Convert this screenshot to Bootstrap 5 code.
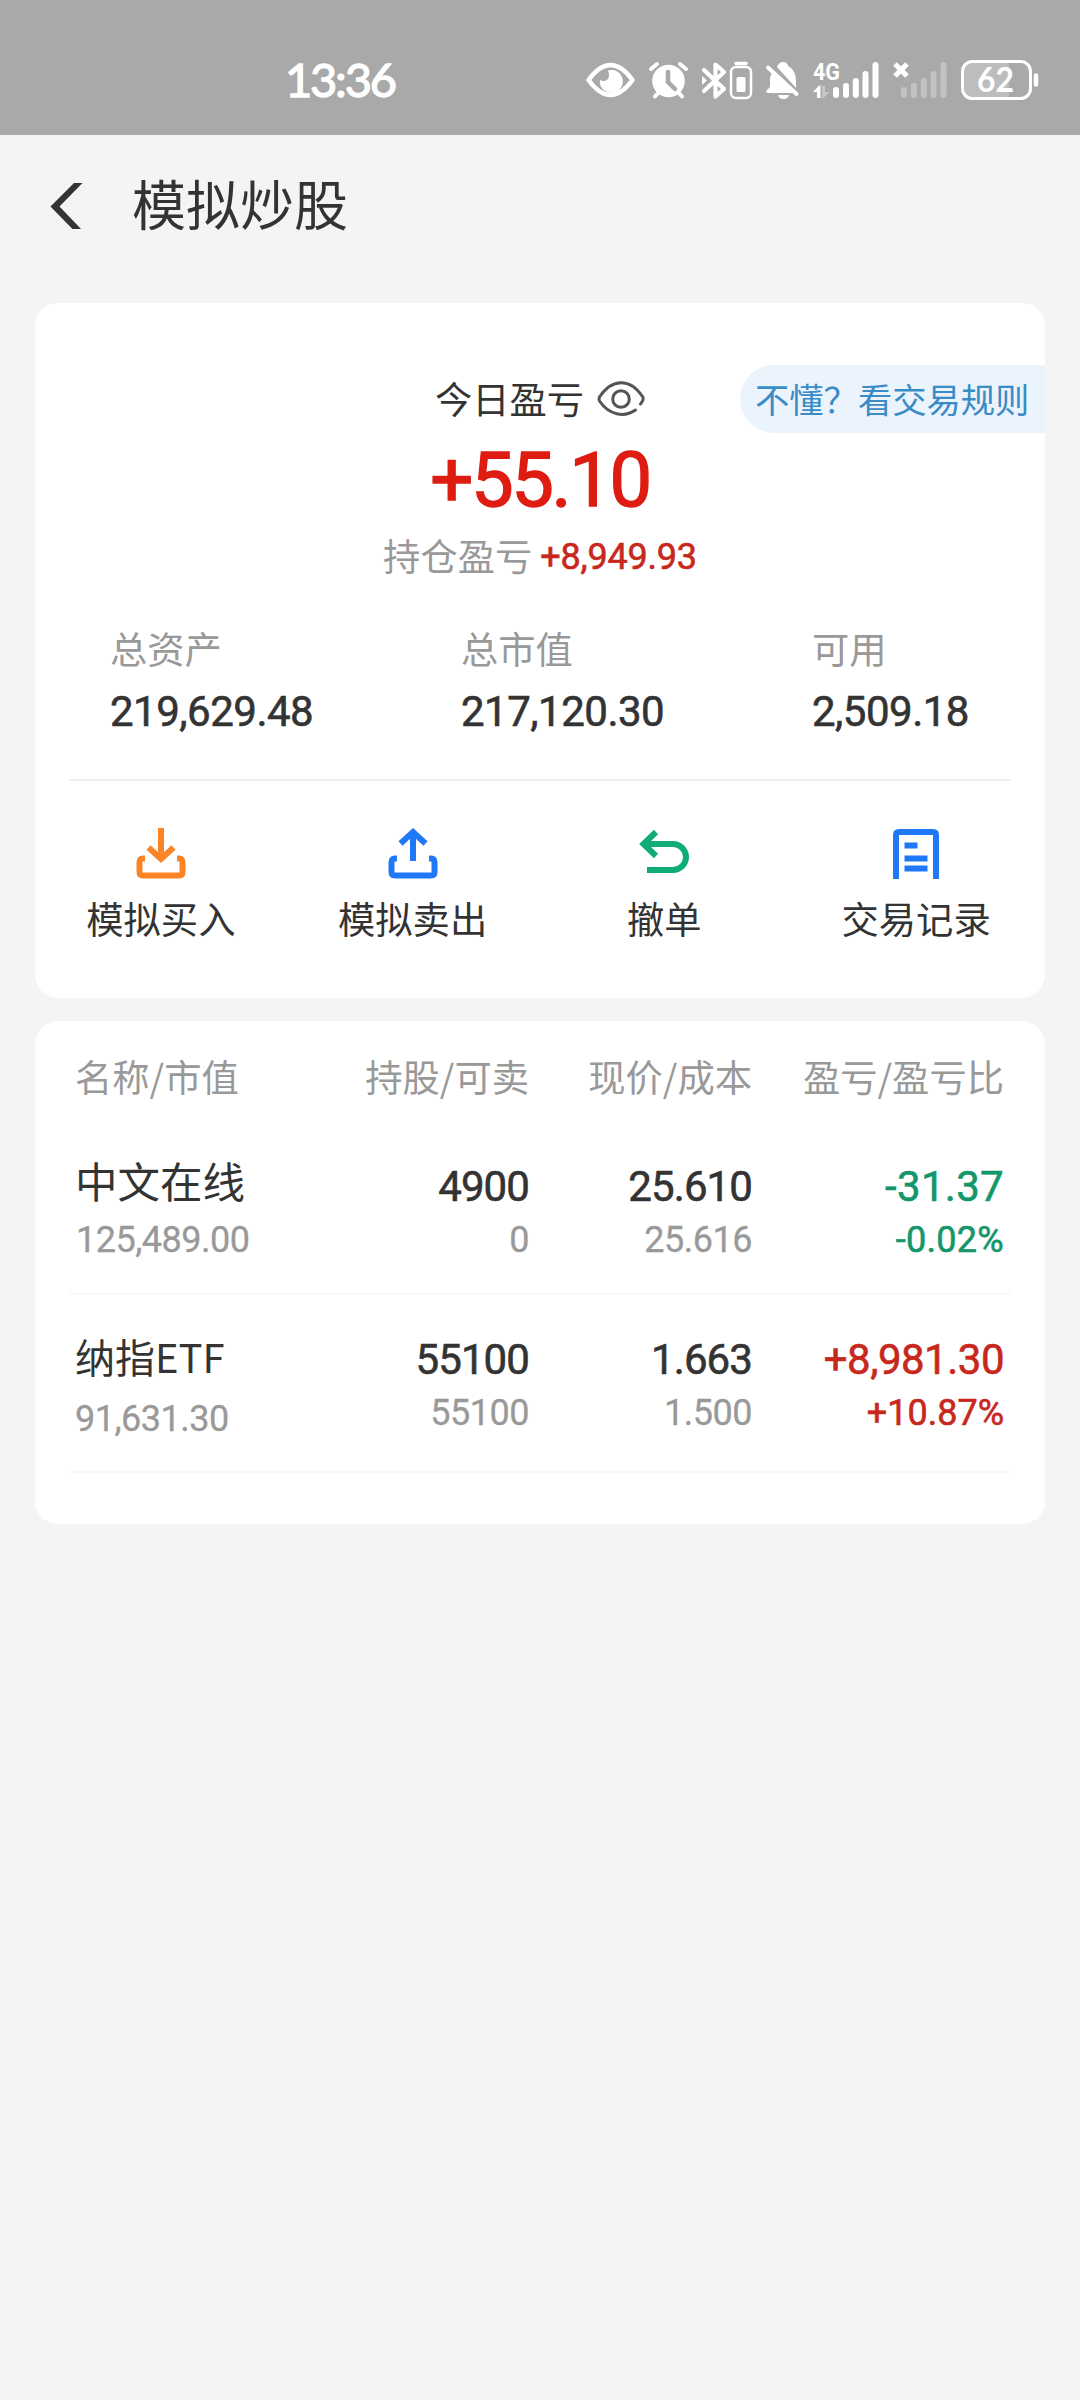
<!DOCTYPE html>
<html lang="zh-CN">
<head>
<meta charset="utf-8">
<meta name="viewport" content="width=device-width, initial-scale=1">
<title>模拟炒股</title>
<link href="https://cdn.jsdelivr.net/npm/bootstrap@5.3.0/dist/css/bootstrap.min.css" rel="stylesheet">
<style>
  body { background: #f4f4f4; color: #333; font-family: "Noto Sans CJK SC", sans-serif; min-height: 2400px; }
  svg { display: block; flex: none; overflow: visible; }
  .status-bar { height: 135px; padding: 52px 40px 0 285px; background: #a9a9a9; color: #fff; }
  .clock { font: 400 47px/54px Lato, sans-serif; letter-spacing: -2.2px; -webkit-text-stroke: 1.3px #fff; }
  .status-icons { padding-top: 8px; }
  .title-bar { height: 168px; padding: 0 0 27px 50px; }
  .title-bar h1 { font-size: 54px; line-height: 80px; font-weight: 400; margin: 0 0 5px 49px; }
  .panel { margin: 0 35px; background: #fff; border-radius: 23px; overflow: hidden; }
  .summary { height: 695px; padding-top: 62px; }
  .holdings { height: 503px; margin-top: 23px; padding: 0 34px; }
  .today { display: grid; grid-template-columns: 305px 1fr 305px; height: 68px; }
  .t37 { font-size: 37.3px; line-height: 50px; }
  .today .t37 { padding-bottom: 3px; gap: 13px; }
  .today svg { margin-top: 3px; }
  .rules { background: #ebf3fc; color: #3a8cc7; border-radius: 34px 0 0 34px; font-size: 34.3px; line-height: 66px; padding-left: 15px; white-space: nowrap; text-decoration: none; }
  .num { font-family: Roboto, sans-serif; font-weight: 400; -webkit-text-stroke: .6px currentColor; padding-top: 1px; margin-bottom: -1px; }
  .total { font-size: 76px; line-height: 92px; letter-spacing: -2.4px; color: #df1c12; -webkit-text-stroke-width: 1.4px; }
  .position-line { height: 62px; }
  .position-line .t37 { margin-top: -3px; }
  .position-line .n36 { letter-spacing: -.2px; }
  .n36 { font-size: 36px; line-height: 50px; }
  .n42 { font-size: 42px; line-height: 50px; letter-spacing: -.5px; }
  .muted { color: #999; }
  .num.muted { -webkit-text-stroke-width: .3px; letter-spacing: -.5px; }
  .up { color: #c8281c; }
  .down { color: #14966a; }
  .num.down { letter-spacing: .3px; }
  .assets { margin-top: 36px; padding-left: 75px; display: grid; grid-template-columns: 351px 351px 1fr; row-gap: 13px; }
  .rule-line { margin: 43px 34px 0; height: 2px; background: #eee; }
  .actions { width: 1007px; margin-top: 46px; }
  .actions .t37 { margin-top: 14px; }
  .cols { display: grid; grid-template-columns: 227px 227px 223px 252px; padding-left: 6px; }
  .cols > div + div { text-align: right; }
  .head { height: 116px; padding-top: 30px; }
  .stock { border-bottom: 2px solid #f8f8f8; box-sizing: border-box; }
  .stock .n42:not(.up):not(.down) { letter-spacing: -.9px; }
  .first { height: 158px; padding-top: 24px; }
  .second { height: 178px; padding-top: 39px; }
  .stock .n36 { margin-top: 3px; }
  .name { font-size: 42.5px; line-height: 50px; margin-top: -6px; }
  .first .name + .n36 { margin-top: 9px; padding-left: 1px; }
  .second .name { font-size: 40px; margin-top: -3px; }
  .second .name + .n36 { margin-top: 12px; }
</style>
</head>
<body>
<header class="status-bar d-flex justify-content-between">
  <div class="clock">13:36</div>
  <div class="status-icons d-flex">
    <svg width="56" height="40" viewBox="586 60 56 40" fill="none" stroke="#fff"><path d="M588.500 80C603 60 618 60 632.500 80C618 100 603 100 588.500 80Z" stroke-width="4.500" stroke-linejoin="round"/><path d="M608 70.500a11.500 11.500 0 1 1-8 9c4 4 12 0 8-9Z" fill="#fff" stroke="none"/></svg>
    <svg width="53" height="40" viewBox="642 60 53 40" fill="none" stroke="#fff" stroke-linecap="round"><circle cx="668.500" cy="81" r="16.300" fill="#fff" stroke="none"/><path d="M651 69l6-5M686 69l-6-5M659 92l-4 4.500M678 92l4 4.500" stroke-width="4"/><path d="M668 72v10l7 7" stroke="#a9a9a9" stroke-width="4.500"/></svg>
    <svg width="63" height="40" viewBox="695 60 63 40" fill="none" stroke="#fff"><path d="M704 70l20 19-8.500 7.500V64.500L724 72l-20 19" stroke-width="4.200" stroke-linecap="round" stroke-linejoin="round"/><path d="M702 76l5 4.500-5 4.500Z" fill="#fff" stroke="none"/><rect x="731" y="67" width="20" height="31" rx="5" stroke-width="2.500"/><path d="M736 63.500h10" stroke-width="3.500" stroke-linecap="round"/><rect x="736.500" y="77" width="9" height="15" rx="1.500" fill="#fff" stroke="none"/></svg>
    <svg width="48" height="40" viewBox="758 60 48 40" fill="#fff"><path d="M777 67c1-3 3-5 6-5 3 0 5 2 5 4 6 3 8 9 8 15v7ZM772 73l21 20H768q-3-1-1-3l3-3V79q0-3 2-6ZM778 95h11q-1 4-5.500 4T778 95Z"/><path d="M768 67.500L796.500 94" stroke="#fff" stroke-width="4" stroke-linecap="round"/></svg>
    <svg width="80" height="40" viewBox="806 60 80 40"><text x="813" y="80" font-family="Roboto, sans-serif" font-weight="700" font-size="24" textLength="27" lengthAdjust="spacingAndGlyphs" fill="#fff">4G</text><path d="M813 92l6-6.500h1.500V98H817v-6Z" fill="#fff"/><path d="M822 86h3v6h4.500l-6 6H822Z" fill="#c6c6c6"/><path d="M836 90v5M846 86v9M855.800 81v14M865.500 74v21M875.500 65v30" stroke="#fff" stroke-width="6" stroke-linecap="round"/></svg>
    <svg width="68" height="40" viewBox="886 60 68 40"><path d="M895 64l12 12m0-12l-12 12" stroke="#fff" stroke-width="5"/><path d="M904 90v5M914 86v9M923.800 81v14M933.500 74v21M943.500 65v30" stroke="#c2c2c2" stroke-width="6" stroke-linecap="round"/></svg>
    <svg width="86" height="40" viewBox="954 60 86 40"><path d="M972 63h37v34h-37q-8 0-8-8V71q0-8 8-8Z" fill="#bdbdbd"/><rect x="962.500" y="61.500" width="68" height="37" rx="10" fill="none" stroke="#fff" stroke-width="3"/><path d="M1036 75.500v9" stroke="#fff" stroke-width="4.500" stroke-linecap="round"/><text x="977" y="92" font-family="Lato, sans-serif" font-weight="700" font-size="34" textLength="37" lengthAdjust="spacingAndGlyphs" fill="#fff">62</text></svg>
  </div>
</header>

<nav class="title-bar d-flex align-items-center">
  <svg width="33" height="46" viewBox="0 0 33 46"><path d="M24 0h8.500L9.500 23.500 31 46h-8.500L.500 23.500Z" fill="#333"/></svg>
  <h1>模拟炒股</h1>
</nav>

<main>
  <section class="panel summary">
    <div class="today">
      <span></span>
      <div class="t37 d-flex align-items-center justify-content-center"><span>今日盈亏</span>
        <svg width="48" height="36" viewBox="0 0 48 36" fill="none" stroke="#555" stroke-width="3" stroke-linecap="round"><path d="M38.500 29C27 37 12 34 2.500 20q-1-2 0-4C15-3 33-3 45.500 15.500q2 2.500-2 7.500"/><circle cx="24" cy="18" r="8.300"/></svg>
      </div>
      <a class="rules" href="#">不懂？看交易规则</a>
    </div>
    <div class="num total text-center">+55.10</div>
    <div class="position-line d-flex align-items-center justify-content-center gap-2"><span class="t37 muted">持仓盈亏</span><span class="num n36 up">+8,949.93</span></div>
    <div class="assets">
      <div class="t37 muted">总资产</div><div class="t37 muted">总市值</div><div class="t37 muted">可用</div>
      <div class="num n42">219,629.48</div><div class="num n42">217,120.30</div><div class="num n42">2,509.18</div>
    </div>
    <div class="rule-line"></div>
    <div class="actions row g-0 text-center">
      <div class="col-3"><svg class="mx-auto" width="52" height="52" viewBox="0 0 52 52" fill="none" stroke="#fa8426" stroke-width="6"><path d="M26 1v31M13.500 20.500L26 32l12.500-11.500M10 31.500H8q-3.500 0-3.500 4V45q0 3.500 3.500 3.500h36q3.500 0 3.500-3.500v-9.500q0-4-3.500-4h-2"/></svg><div class="t37">模拟买入</div></div>
      <div class="col-3"><svg class="mx-auto" width="52" height="52" viewBox="0 0 52 52" fill="none" stroke="#1f78f5" stroke-width="6"><path d="M26 34V5M13.500 16.500L26 5l12.500 11.500M10 31.500H8q-3.500 0-3.500 4V45q0 3.500 3.500 3.500h36q3.500 0 3.500-3.500v-9.500q0-4-3.500-4h-2"/></svg><div class="t37">模拟卖出</div></div>
      <div class="col-3"><svg class="mx-auto" width="52" height="52" viewBox="0 0 52 52" fill="none" stroke="#0fac79" stroke-width="6"><path d="M18 5L5.500 17 18 29M6 17h29a13 13 0 0 1 0 26H9"/></svg><div class="t37">撤单</div></div>
      <div class="col-3"><svg class="mx-auto" width="52" height="52" viewBox="0 0 52 52" fill="none" stroke="#1f78f5" stroke-width="6"><path d="M6 52V8q0-3 3-3h34q3 0 3 3v44M14.500 18.500h13M14.500 31.500h23M14.500 41.500h23"/></svg><div class="t37">交易记录</div></div>
    </div>
  </section>

  <section class="panel holdings">
    <div class="cols head t37 muted"><div>名称/市值</div><div>持股/可卖</div><div>现价/成本</div><div>盈亏/盈亏比</div></div>
    <div class="cols stock first">
      <div><div class="name">中文在线</div><div class="num n36 muted">125,489.00</div></div>
      <div><div class="num n42">4900</div><div class="num n36 muted">0</div></div>
      <div><div class="num n42">25.610</div><div class="num n36 muted">25.616</div></div>
      <div><div class="num n42 down">-31.37</div><div class="num n36 down">-0.02%</div></div>
    </div>
    <div class="cols stock second">
      <div><div class="name">纳指ETF</div><div class="num n36 muted">91,631.30</div></div>
      <div><div class="num n42">55100</div><div class="num n36 muted">55100</div></div>
      <div><div class="num n42">1.663</div><div class="num n36 muted">1.500</div></div>
      <div><div class="num n42 up">+8,981.30</div><div class="num n36 up">+10.87%</div></div>
    </div>
  </section>
</main>
<script src="https://cdn.jsdelivr.net/npm/bootstrap@5.3.0/dist/js/bootstrap.bundle.min.js"></script>
</body>
</html>
